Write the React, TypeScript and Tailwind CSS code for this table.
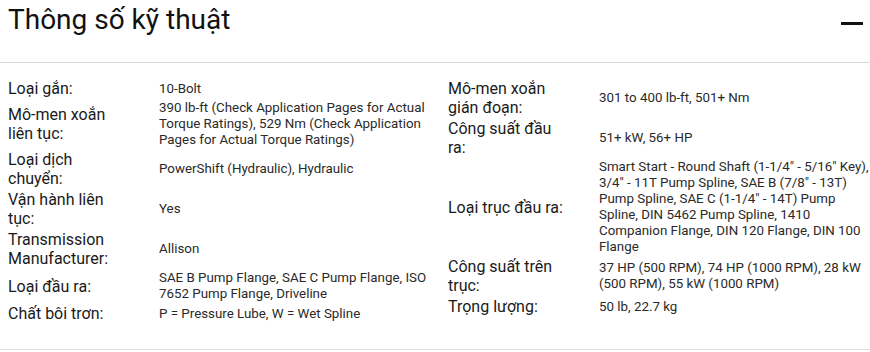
import React from "react";

type Spec = { label: string; value: string };

const leftSpecs: Spec[] = [
  { label: "Loại gắn:", value: "10-Bolt" },
  {
    label: "Mô-men xoắn liên tục:",
    value:
      "390 lb-ft (Check Application Pages for Actual Torque Ratings), 529 Nm (Check Application Pages for Actual Torque Ratings)",
  },
  { label: "Loại dịch chuyển:", value: "PowerShift (Hydraulic), Hydraulic" },
  { label: "Vận hành liên tục:", value: "Yes" },
  { label: "Transmission Manufacturer:", value: "Allison" },
  {
    label: "Loại đầu ra:",
    value: "SAE B Pump Flange, SAE C Pump Flange, ISO 7652 Pump Flange, Driveline",
  },
  { label: "Chất bôi trơn:", value: "P = Pressure Lube, W = Wet Spline" },
];

const rightSpecs: Spec[] = [
  { label: "Mô-men xoắn gián đoạn:", value: "301 to 400 lb-ft, 501+ Nm" },
  { label: "Công suất đầu ra:", value: "51+ kW, 56+ HP" },
  {
    label: "Loại trục đầu ra:",
    value:
      'Smart Start - Round Shaft (1-1/4" - 5/16" Key), 3/4" - 11T Pump Spline, SAE B (7/8" - 13T) Pump Spline, SAE C (1-1/4" - 14T) Pump Spline, DIN 5462 Pump Spline, 1410 Companion Flange, DIN 120 Flange, DIN 100 Flange',
  },
  {
    label: "Công suất trên trục:",
    value: "37 HP (500 RPM), 74 HP (1000 RPM), 28 kW (500 RPM), 55 kW (1000 RPM)",
  },
  { label: "Trọng lượng:", value: "50 lb, 22.7 kg" },
];

function SpecList({ specs }: { specs: Spec[] }) {
  return (
    <div className="flex flex-col gap-y-[2px]">
      {specs.map((s) => (
        <div key={s.label} className="flex items-center">
          <div className="w-[122px] mr-[29px] shrink-0 text-[16px] leading-[19px] text-[#1a1a1a]">
            {s.label}
          </div>
          <div className="flex-1 text-[13.33px] leading-[16px] text-[#2a2a2a]">{s.value}</div>
        </div>
      ))}
    </div>
  );
}

export default function App() {
  return (
    <div className="w-[870px] h-[352px] bg-white font-['Roboto',_'Noto_Sans',_sans-serif]">
      <div className="flex items-start justify-between border-b border-[#d3d8de] h-[63px] pl-2 pr-[7px] pt-[4px]">
        <h2 className="text-[28px] leading-[32px] font-normal text-[#111]">Thông số kỹ thuật</h2>
        <div className="mt-[18px] h-[3px] w-[22px] bg-[#111]" />
      </div>
      <div className="border-b border-[#dedede] h-[287px] pl-2 pt-4">
        <div className="grid grid-cols-[440px_1fr]">
          <SpecList specs={leftSpecs} />
          <SpecList specs={rightSpecs} />
        </div>
      </div>
    </div>
  );
}
